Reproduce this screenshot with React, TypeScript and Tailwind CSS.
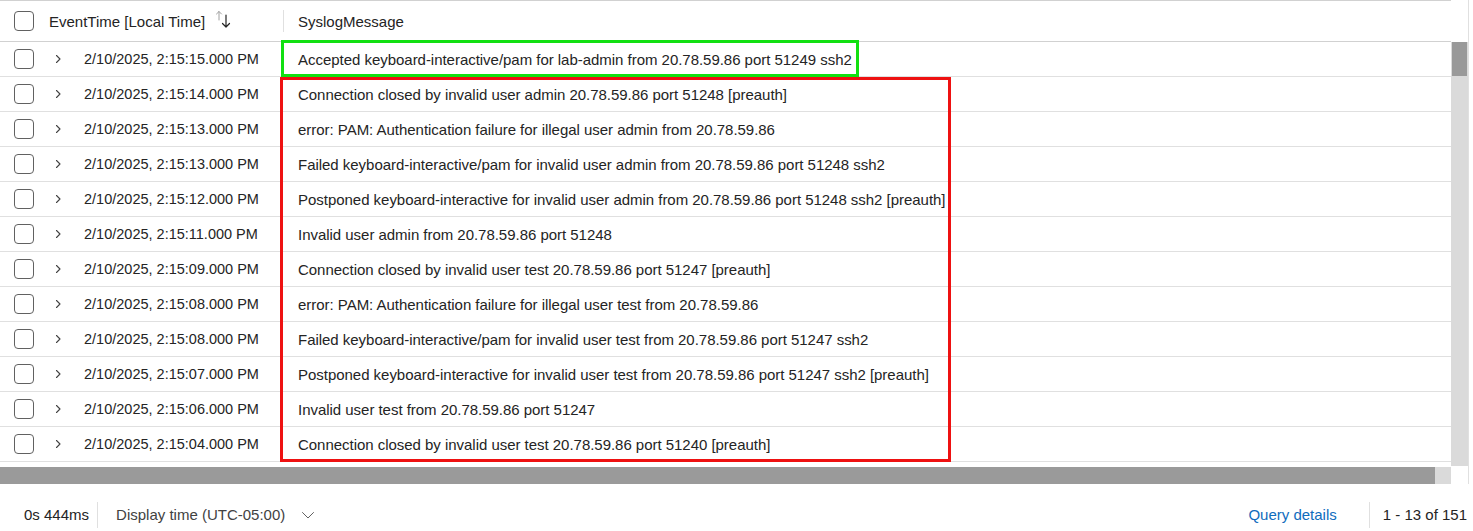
import React from "react";

const rows = [
  ["2/10/2025, 2:15:15.000 PM", "Accepted keyboard-interactive/pam for lab-admin from 20.78.59.86 port 51249 ssh2"],
  ["2/10/2025, 2:15:14.000 PM", "Connection closed by invalid user admin 20.78.59.86 port 51248 [preauth]"],
  ["2/10/2025, 2:15:13.000 PM", "error: PAM: Authentication failure for illegal user admin from 20.78.59.86"],
  ["2/10/2025, 2:15:13.000 PM", "Failed keyboard-interactive/pam for invalid user admin from 20.78.59.86 port 51248 ssh2"],
  ["2/10/2025, 2:15:12.000 PM", "Postponed keyboard-interactive for invalid user admin from 20.78.59.86 port 51248 ssh2 [preauth]"],
  ["2/10/2025, 2:15:11.000 PM", "Invalid user admin from 20.78.59.86 port 51248"],
  ["2/10/2025, 2:15:09.000 PM", "Connection closed by invalid user test 20.78.59.86 port 51247 [preauth]"],
  ["2/10/2025, 2:15:08.000 PM", "error: PAM: Authentication failure for illegal user test from 20.78.59.86"],
  ["2/10/2025, 2:15:08.000 PM", "Failed keyboard-interactive/pam for invalid user test from 20.78.59.86 port 51247 ssh2"],
  ["2/10/2025, 2:15:07.000 PM", "Postponed keyboard-interactive for invalid user test from 20.78.59.86 port 51247 ssh2 [preauth]"],
  ["2/10/2025, 2:15:06.000 PM", "Invalid user test from 20.78.59.86 port 51247"],
  ["2/10/2025, 2:15:04.000 PM", "Connection closed by invalid user test 20.78.59.86 port 51240 [preauth]"],
];

const Checkbox = () => (
  <div className="w-5 h-5 shrink-0 rounded-[4px] border border-[#616161] bg-white" />
);

const Chevron = () => (
  <svg width="12" height="12" viewBox="0 0 12 12" className="shrink-0">
    <path d="M4.5 2.5 L8 6 L4.5 9.5" fill="none" stroke="#424242" strokeWidth="1.1" strokeLinecap="round" strokeLinejoin="round" />
  </svg>
);

const SortIcon = () => (
  <svg width="18" height="20" viewBox="0 0 18 20" className="shrink-0">
    <path d="M4 10 V1.5 M1.5 4 L4 1.5 L6.5 4" fill="none" stroke="#a0a0a0" strokeWidth="1" strokeLinecap="round" strokeLinejoin="round" />
    <path d="M11 5 V17 M7.5 13.5 L11 17 L14.5 13.5" fill="none" stroke="#242424" strokeWidth="1.2" strokeLinecap="round" strokeLinejoin="round" />
  </svg>
);

export default function App() {
  return (
    <div className="relative w-[1473px] h-[531px] bg-white text-[#242424] text-[15px] overflow-hidden" style={{ fontFamily: '"Liberation Sans", Arial, sans-serif' }}>
      <div className="w-[1469px] border-r border-[#e0e0e0]">
        {/* header */}
        <div className="flex h-[42px] border-t border-b border-[#d1d1d1] w-[1451px] items-center">
          <div className="w-[283px] flex items-center pl-[14px] h-full">
            <Checkbox />
            <span className="ml-[15px] pt-[2px]">EventTime [Local Time]</span>
            <span className="ml-[10px] mt-[-2px]"><SortIcon /></span>
          </div>
          <div className="w-px h-[22px] bg-[#e0e0e0]" />
          <div className="pl-[14px] pt-[2px]">SyslogMessage</div>
        </div>
        {/* body */}
        <div className="flex h-[424px]">
          <div className="w-[1451px] overflow-hidden">
            {rows.map(([t, m], i) => (
              <div key={i} className="flex items-center h-[35px] border-b border-[#e0e0e0] shrink-0">
                <div className="w-[284px] flex items-center pl-[14px]">
                  <Checkbox />
                  <span className="ml-[18px]"><Chevron /></span>
                  <span className="ml-[20px] pt-[2px] whitespace-nowrap text-[14.5px]">{t}</span>
                </div>
                <div className="pl-[14px] pt-[2px] whitespace-nowrap tracking-[-0.03px]">{m}</div>
              </div>
            ))}
          </div>
          <div className="w-[17px] flex flex-col bg-[#dadada]">
            <div className="h-[34px] mx-px bg-[#999999]" />
          </div>
        </div>
        {/* horizontal scrollbar */}
        <div className="flex h-[17px] mt-px">
          <div className="w-[1435px] bg-[#9a9a9a]" />
          <div className="w-[16px] bg-[#dadada]" />
          <div className="flex-1 bg-white" />
        </div>
      </div>
      {/* footer */}
      <div className="flex items-center h-[47px] pt-[15px] w-[1469px]">
        <span className="pl-[24px]">0s 444ms</span>
        <div className="w-px h-[26px] bg-[#e0e0e0] ml-[8px]" />
        <span className="ml-[18px] text-[#424242]">Display time (UTC-05:00)</span>
        <svg width="16" height="16" viewBox="0 0 16 16" className="ml-[15px]">
          <path d="M2.5 5.5 L8 11 L13.5 5.5" fill="none" stroke="#616161" strokeWidth="1" strokeLinecap="round" strokeLinejoin="round" />
        </svg>
        <div className="flex-1" />
        <span className="text-[#0f6cbd]">Query details</span>
        <div className="w-px h-[26px] bg-[#e0e0e0] ml-[32px]" />
        <span className="ml-[13px] mr-[2px]">1 - 13 of 151</span>
      </div>
      {/* annotation boxes */}
      <div className="absolute left-[281px] top-[40px] w-[578px] h-[37px] border-[3px] border-[#11e011]" />
      <div className="absolute left-[280px] top-[77px] w-[671px] h-[385px] border-[3px] border-[#ee1111]" />
    </div>
  );
}
